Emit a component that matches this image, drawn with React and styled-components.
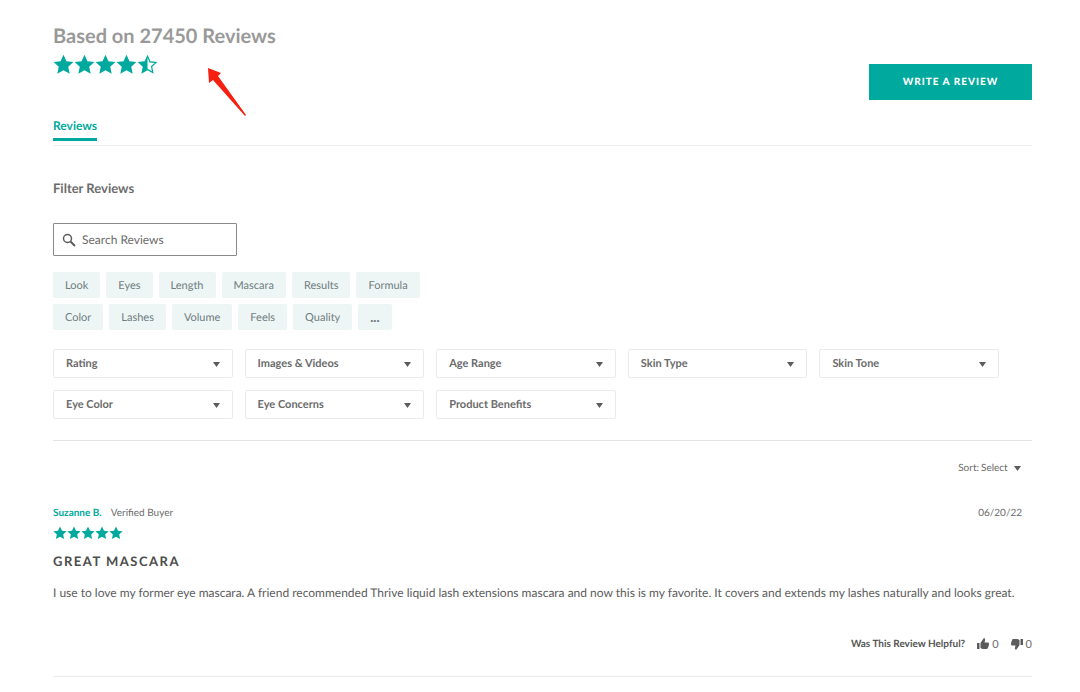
import { useState } from "react";
import styled, { createGlobalStyle } from "styled-components";

const GlobalStyle = createGlobalStyle`
  * {
    box-sizing: border-box;
  }
  body {
    margin: 0;
    background: #fff;
    color: #6b6b6b;
    font-family: Lato, "Liberation Sans", sans-serif;
    text-rendering: geometricPrecision;
  }
  button, input, select {
    font-family: inherit;
    text-rendering: inherit;
    margin: 0;
  }
`;

const Page = styled.main`
  padding: 24px 48px 0 53px;
`;

const Header = styled.header`
  position: relative;
  display: flex;
  justify-content: space-between;
  align-items: flex-start;
`;

const Total = styled.h1`
  margin: 0 0 4px;
  color: #999;
  font-size: 20px;
  line-height: 24px;
  font-weight: 700;
`;

const Stars = styled.div`
  display: flex;
  height: 24px;
  align-items: center;

  svg {
    width: ${({ $size }) => $size}px;
    height: ${({ $size }) => $size}px;
    fill: #00a99d;
  }
`;

const Arrow = styled.svg`
  position: absolute;
  top: 44px;
  left: 155px;
  width: 38px;
  height: 48px;
  fill: #f5200f;
`;

const WriteButton = styled.button`
  width: 163px;
  height: 36px;
  margin-top: 40px;
  border: 0;
  background: #00a99d;
  color: #fff;
  font-size: 10px;
  font-weight: 900;
  letter-spacing: 1px;
  cursor: pointer;
`;

const Tabs = styled.nav`
  display: flex;
  height: 46px;
  padding-bottom: 4px;
  align-items: flex-end;
  border-bottom: 1px solid #eee;
`;

const Tab = styled.a`
  padding-bottom: 4px;
  border-bottom: 3px solid #00a99d;
  color: #00a99d;
  font-size: 12px;
  line-height: 16px;
  font-weight: 700;
  text-decoration: none;
`;

const FilterTitle = styled.h2`
  margin: 33px 0 26px;
  font-size: 13px;
  line-height: 18px;
  font-weight: 700;
`;

const SearchBox = styled.label`
  display: flex;
  align-items: center;
  gap: 6px;
  width: 184px;
  height: 33px;
  padding: 0 8px;
  border: 1px solid #8a8a8a;
  border-radius: 1px;

  svg {
    flex: none;
    width: 14px;
    height: 14px;
  }
`;

const SearchInput = styled.input`
  min-width: 0;
  flex: 1;
  padding: 0;
  border: 0;
  outline: 0;
  color: #6b6b6b;
  font-size: 12px;

  &::placeholder {
    color: #6b6b6b;
    opacity: 1;
  }
`;

const Topics = styled.div`
  display: flex;
  flex-wrap: wrap;
  gap: 6px;
  max-width: 380px;
  margin: 16px 0 19px;
`;

const Topic = styled.button`
  height: 26px;
  padding: 0 12px;
  border: 0;
  border-radius: 2px;
  background: #edf6f5;
  color: #6f7c80;
  font-size: ${({ $bold }) => ($bold ? 13 : 11)}px;
  font-weight: ${({ $bold }) => ($bold ? 900 : 400)};
  cursor: pointer;
`;

const Filters = styled.div`
  display: grid;
  grid-template-columns: repeat(5, 1fr);
  gap: 12px;
  padding: 0 33px 21px 0;
  border-bottom: 1px solid #e4e4e4;
`;

const FilterField = styled.div`
  position: relative;

  svg {
    position: absolute;
    top: 13px;
    right: 13px;
    pointer-events: none;
  }
`;

const FilterSelect = styled.select`
  display: block;
  appearance: none;
  width: 100%;
  height: 29px;
  padding: 0 12px;
  border: 1px solid #ebebeb;
  border-radius: 2px;
  background: #fff;
  color: #6b6b6b;
  font-size: 11px;
  font-weight: 700;
`;

const SortRow = styled.div`
  display: flex;
  justify-content: flex-end;
  align-items: center;
  gap: 2px;
  height: 16px;
  margin: 19px 11px 0 0;
  font-size: 10px;
`;

const SortSelect = styled.select`
  appearance: none;
  padding: 0;
  margin-right: 4px;
  border: 0;
  background: none;
  color: inherit;
  font-size: 10px;
`;

const Review = styled.article`
  padding: 29px 0 24px;
  border-bottom: 1px solid #e9e9e9;
`;

const ReviewMeta = styled.div`
  display: flex;
  gap: 9px;
  padding-right: 10px;
  font-size: 10px;
  line-height: 16px;
`;

const Author = styled.span`
  color: #00a99d;
  font-weight: 700;
`;

const ReviewDate = styled.time`
  margin-left: auto;
`;

const ReviewTitle = styled.h3`
  margin: 7px 0 14px;
  color: #4d4d4d;
  font-size: 13px;
  line-height: 18px;
  font-weight: 700;
  letter-spacing: 1.5px;
  text-transform: uppercase;
`;

const ReviewText = styled.p`
  margin: 0 0 34px;
  color: #5c5c5c;
  font-size: 12px;
  line-height: 18px;
`;

const Helpful = styled.div`
  display: flex;
  justify-content: flex-end;
  align-items: center;
  gap: 12px;
  height: 16px;
  color: #555;
  font-size: 10px;
  font-weight: 700;
`;

const Vote = styled.button`
  display: flex;
  align-items: center;
  gap: 3px;
  padding: 0;
  border: 0;
  background: none;
  color: #6b6b6b;
  font-size: 11px;
  cursor: pointer;

  svg {
    width: 12px;
    height: 12px;
    fill: #5c5c5c;
  }
`;

const topics = [
  "Look", "Eyes", "Length", "Mascara", "Results", "Formula",
  "Color", "Lashes", "Volume", "Feels", "Quality",
];

const filters = [
  "Rating", "Images & Videos", "Age Range", "Skin Type",
  "Skin Tone", "Eye Color", "Eye Concerns", "Product Benefits",
];

const STAR = "M10 .8l2.8 6.1 6.6.7-4.9 4.5 1.4 6.6L10 15.4l-5.9 3.3 1.4-6.6L.6 7.6l6.6-.7z";
const HALF_STAR = `${STAR}M10 3.6v10.5l4.2 2.4-1-4.8 3.6-3.2-4.8-.5z`;

function Rating({ value, size }) {
  return (
    <Stars $size={size} role="img" aria-label={`${value} out of 5 stars`}>
      {[1, 2, 3, 4, 5].map((n) => (
        <svg key={n} viewBox="0 0 20 20" fillRule="evenodd">
          <path d={value >= n ? STAR : HALF_STAR} />
        </svg>
      ))}
    </Stars>
  );
}

function Caret() {
  return (
    <svg width="7" height="5" viewBox="0 0 7 5" aria-hidden="true">
      <path d="M0 0h7L3.5 5z" fill="#5c5c5c" />
    </svg>
  );
}

function Thumb({ down }) {
  return (
    <svg viewBox="0 0 24 24" aria-hidden="true">
      <path
        transform={down ? "rotate(180 12 12)" : undefined}
        d="M0 10h5v12H0zM7 10l6-9c2-1 4 1 3 4l-1 4h7c2 0 2.500 2 1.500 3 1 1 .5 3-.5 3.500.5 1.500 0 2.500-1 3 .3 2-.7 3.500-3 3.500h-8L7 20z"
      />
    </svg>
  );
}

export default function App() {
  const [search, setSearch] = useState("");
  const [votes, setVotes] = useState({ up: 0, down: 0 });

  const vote = (kind) => setVotes({ ...votes, [kind]: votes[kind] + 1 });

  return (
    <>
      <GlobalStyle />
      <Page>
        <Header>
          <div>
            <Total>Based on 27450 Reviews</Total>
            <Rating value={4.5} size={21} />
          </div>
          <Arrow viewBox="0 0 38 48" aria-hidden="true">
            <path d="M0 0l13 5-3 3 28 39-1 1L5 12l-4 3z" />
          </Arrow>
          <WriteButton type="button">WRITE A REVIEW</WriteButton>
        </Header>
        <Tabs>
          <Tab href="#reviews">Reviews</Tab>
        </Tabs>

        <section id="reviews">
          <FilterTitle>Filter Reviews</FilterTitle>
          <SearchBox>
            <svg viewBox="0 0 14 14" fill="none" stroke="#5c5c5c" aria-hidden="true">
              <circle cx="5.500" cy="5.500" r="4" strokeWidth="1.500" />
              <path d="M8.500 8.500L13 13" strokeWidth="2" />
            </svg>
            <SearchInput
              type="text"
              aria-label="Search Reviews"
              placeholder="Search Reviews"
              value={search}
              onChange={(e) => setSearch(e.target.value)}
            />
          </SearchBox>
          <Topics>
            {topics.map((topic) => (
              <Topic key={topic} type="button">{topic}</Topic>
            ))}
            <Topic type="button" $bold aria-label="More topics">...</Topic>
          </Topics>
          <Filters>
            {filters.map((name) => (
              <FilterField key={name}>
                <FilterSelect aria-label={name}>
                  <option>{name}</option>
                </FilterSelect>
                <Caret />
              </FilterField>
            ))}
          </Filters>

          <SortRow>
            <label htmlFor="sort">Sort:</label>
            <SortSelect id="sort">
              <option>Select</option>
            </SortSelect>
            <Caret />
          </SortRow>

          <Review>
            <ReviewMeta>
              <Author>Suzanne B.</Author>
              <span>Verified Buyer</span>
              <ReviewDate dateTime="2022-06-20">06/20/22</ReviewDate>
            </ReviewMeta>
            <Rating value={5} size={14} />
            <ReviewTitle>Great Mascara</ReviewTitle>
            <ReviewText>
              I use to love my former eye mascara. A friend recommended Thrive liquid lash
              extensions mascara and now this is my favorite. It covers and extends my lashes
              naturally and looks great.
            </ReviewText>
            <Helpful>
              <span>Was This Review Helpful?</span>
              <Vote type="button" aria-label="Helpful" onClick={() => vote("up")}>
                <Thumb />
                {votes.up}
              </Vote>
              <Vote type="button" aria-label="Not helpful" onClick={() => vote("down")}>
                <Thumb down />
                {votes.down}
              </Vote>
            </Helpful>
          </Review>
        </section>
      </Page>
    </>
  );
}
